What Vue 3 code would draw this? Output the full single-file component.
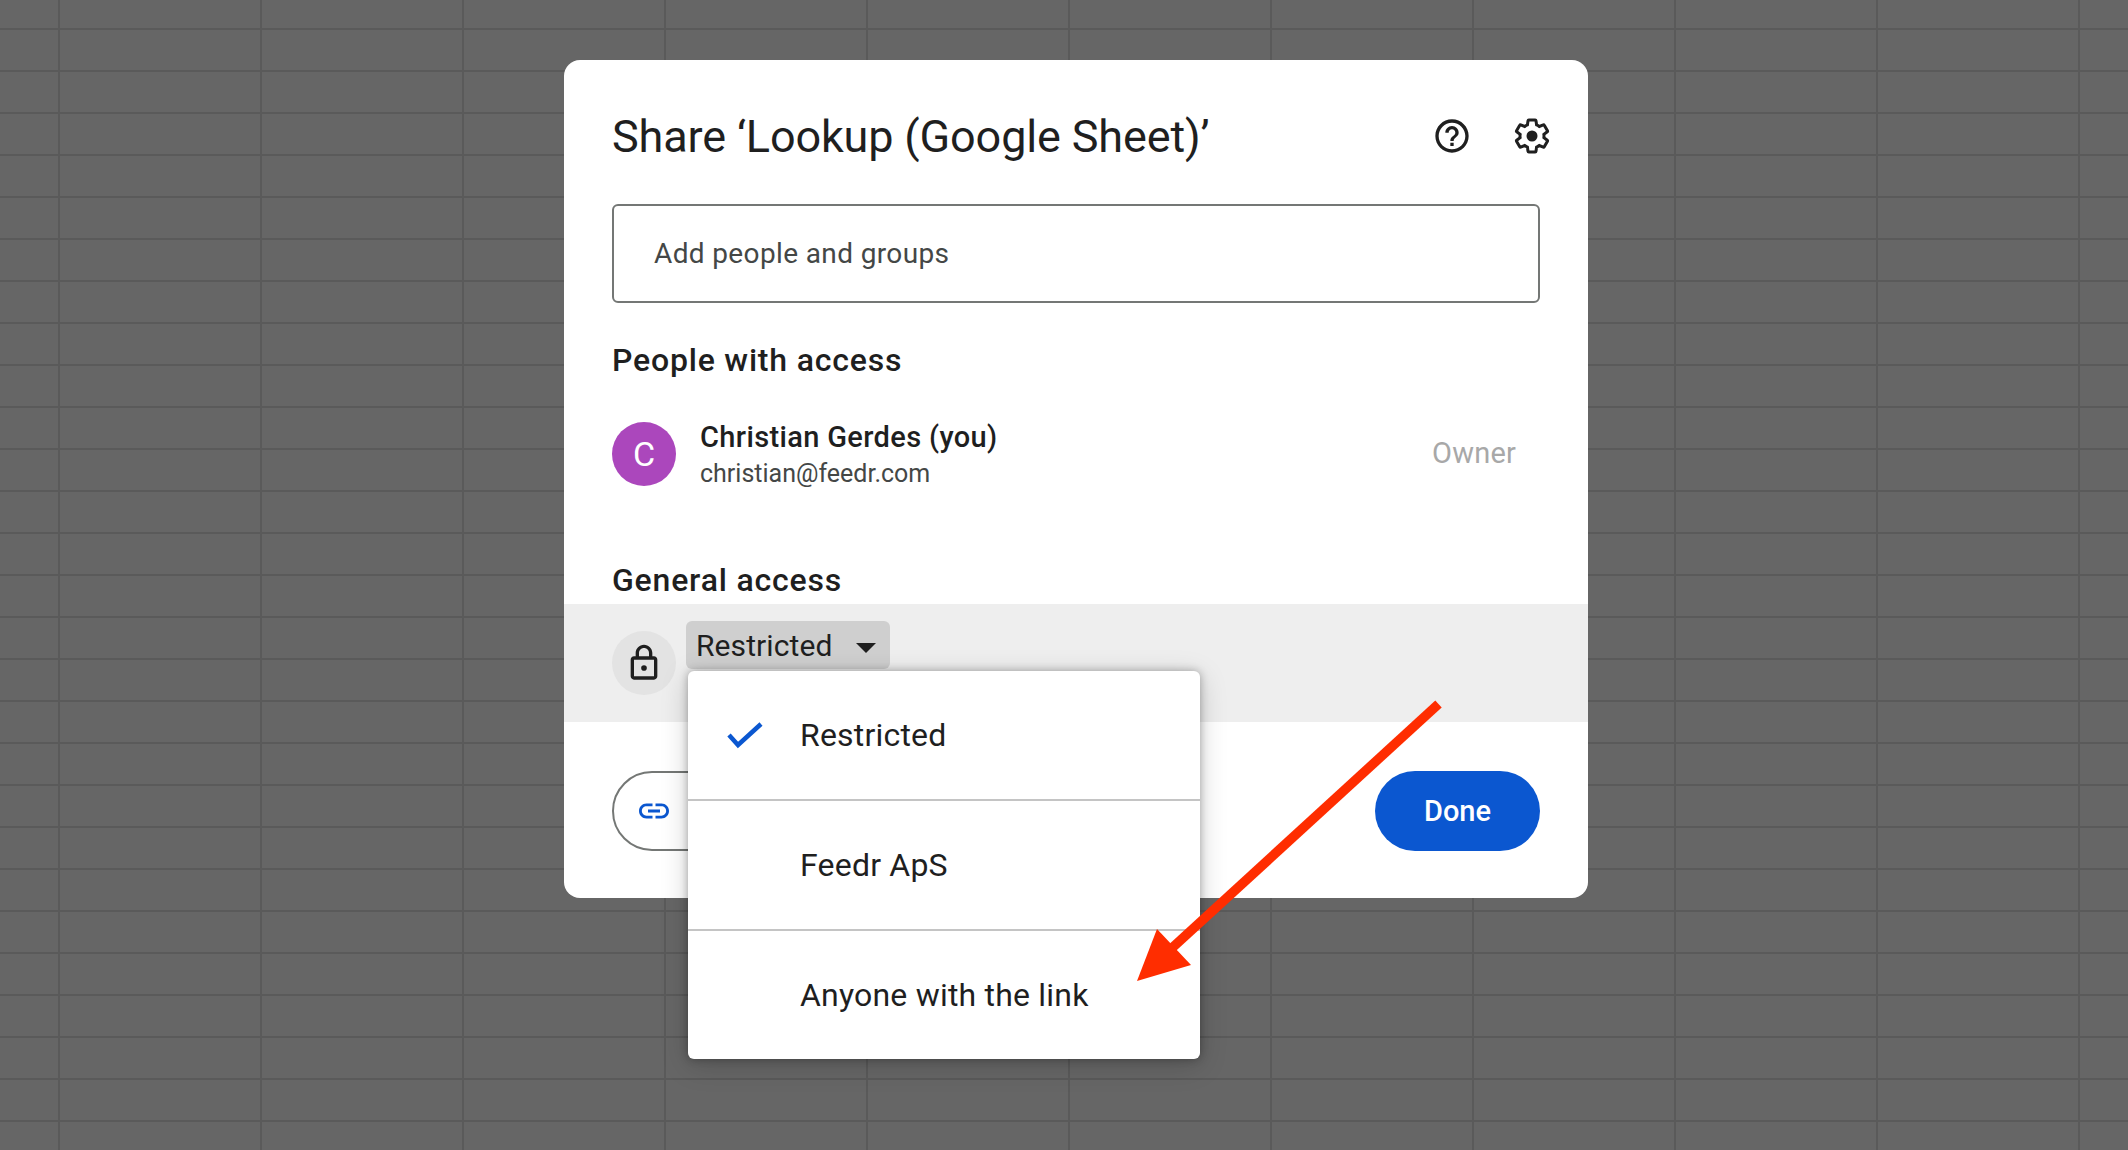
<template>
  <div class="page">
    <div class="dialog">
      <header class="dialog-head">
        <h1 class="title">Share ‘Lookup (Google Sheet)’</h1>
        <div class="head-icons">
          <svg class="icon" viewBox="0 0 24 24">
            <path d="M11 18h2v-2h-2v2zm1-16C6.48 2 2 6.48 2 12s4.48 10 10 10 10-4.48 10-10S17.52 2 12 2zm0 18c-4.41 0-8-3.59-8-8s3.59-8 8-8 8 3.59 8 8-3.59 8-8 8zm0-14c-2.21 0-4 1.79-4 4h2c0-1.1.9-2 2-2s2 .9 2 2c0 2-3 1.75-3 5h2c0-2.25 3-2.5 3-5 0-2.21-1.79-4-4-4z" />
          </svg>
          <svg class="icon" viewBox="0 0 24 24">
            <path class="gear" d="M19.14 12.94c.04-.3.06-.61.06-.94 0-.32-.02-.64-.07-.94l2.03-1.58c.18-.14.23-.41.12-.61l-1.92-3.32c-.12-.22-.37-.29-.59-.22l-2.39.96c-.5-.38-1.03-.7-1.62-.94l-.36-2.54c-.04-.24-.24-.41-.48-.41h-3.84c-.24 0-.43.17-.47.41l-.36 2.54c-.59.24-1.13.57-1.62.94l-2.39-.96c-.22-.08-.47 0-.59.22L2.74 8.87c-.12.21-.08.47.12.61l2.03 1.58c-.05.3-.09.63-.09.94s.02.64.07.94l-2.03 1.58c-.18.14-.23.41-.12.61l1.92 3.32c.12.22.37.29.59.22l2.39-.96c.5.38 1.03.7 1.62.94l.36 2.54c.05.24.24.41.48.41h3.84c.24 0 .44-.17.47-.41l.36-2.54c.59-.24 1.13-.56 1.62-.94l2.39.96c.22.08.47 0 .59-.22l1.92-3.32c.12-.22.07-.47-.12-.61l-2.01-1.58z" />
            <circle cx="12" cy="12" r="3.3" />
          </svg>
        </div>
      </header>

      <div class="people-input">Add people and groups</div>

      <h2 class="section-title first">People with access</h2>
      <div class="person">
        <div class="avatar">C</div>
        <div class="person-text">
          <div class="person-name">Christian Gerdes (you)</div>
          <div class="person-mail">christian@feedr.com</div>
        </div>
        <div class="role">Owner</div>
      </div>

      <h2 class="section-title second">General access</h2>
      <div class="access-band">
        <div class="lock-circle">
          <svg class="icon" viewBox="0 0 24 24">
            <path d="M18 8h-1V6c0-2.76-2.24-5-5-5S7 3.24 7 6v2H6c-1.1 0-2 .9-2 2v10c0 1.1.9 2 2 2h12c1.1 0 2-.9 2-2V10c0-1.1-.9-2-2-2zM9 6c0-1.66 1.34-3 3-3s3 1.34 3 3v2H9V6zm9 14H6V10h12v10z" />
            <circle cx="12" cy="15" r="1.7" />
          </svg>
        </div>
        <div class="access-text">
          <div class="chip">
            <span>Restricted</span>
            <span class="caret"></span>
          </div>
          <div class="access-desc">Only people with access can open with the link</div>
        </div>
      </div>

      <div class="actions">
        <button class="btn-outline">
          <svg class="link-icon" viewBox="0 0 24 24">
            <path d="M3.9 12c0-1.71 1.39-3.1 3.1-3.1h4V7H7c-2.76 0-5 2.24-5 5s2.24 5 5 5h4v-1.9H7c-1.71 0-3.1-1.39-3.1-3.1zM8 13h8v-2H8v2zm9-6h-4v1.9h4c1.71 0 3.1 1.39 3.1 3.1s-1.39 3.1-3.1 3.1h-4V17h4c2.76 0 5-2.24 5-5s-2.24-5-5-5z" />
          </svg>
          <span>Copy link</span>
        </button>
        <button class="btn-done">Done</button>
      </div>

      <div class="menu">
        <div v-for="item in menuItems" :key="item.label" class="menu-row">
          <svg v-if="item.selected" class="check" viewBox="0 0 36 28">
            <polyline points="2,14 11,24 34,3" />
          </svg>
          <span class="menu-label">{{ item.label }}</span>
        </div>
      </div>
    </div>

    <svg class="arrow" viewBox="0 0 2128 1150">
      <line x1="1438.5" y1="704" x2="1172" y2="948" />
      <polygon points="1137,981 1157,929 1191,965" />
    </svg>
  </div>
</template>

<script setup>
const menuItems = [
  { label: 'Restricted', selected: true },
  { label: 'Feedr ApS', selected: false },
  { label: 'Anyone with the link', selected: false }
]
</script>

<style>
html, body {
  margin: 0;
  background: #666;
}
</style>

<style scoped>
.page {
  position: relative;
  width: 2128px;
  height: 1150px;
  overflow: hidden;
  padding: 60px 0 0 564px;
  box-sizing: border-box;
  font-family: Roboto, "Liberation Sans", sans-serif;
  color: #1f1f1f;
  background-color: #666;
  background-image:
    linear-gradient(90deg, #5a5a5a 2px, transparent 2px),
    linear-gradient(180deg, #5a5a5a 2px, transparent 2px);
  background-size: 202px 42px;
  background-position: 58px 28px;
}

.dialog {
  position: relative;
  width: 1024px;
  height: 838px;
  box-sizing: border-box;
  padding: 48px 48px 0;
  background: #fff;
  border-radius: 16px;
}

.dialog-head {
  display: flex;
  align-items: center;
  justify-content: space-between;
  height: 56px;
}

.title {
  margin: 0;
  font-size: 45px;
  font-weight: 400;
  letter-spacing: -0.15px;
}

.head-icons {
  display: flex;
  gap: 40px;
  margin-right: -12px;
}

.icon {
  display: block;
  width: 40px;
  height: 40px;
  fill: #1f1f1f;
}

.gear {
  fill: none;
  stroke: #1f1f1f;
  stroke-width: 1.8;
}

.people-input {
  display: flex;
  align-items: center;
  height: 99px;
  box-sizing: border-box;
  margin-top: 40px;
  padding-left: 40px;
  border: 2px solid #747775;
  border-radius: 6px;
  font-size: 28px;
  letter-spacing: 0.37px;
  color: #444746;
}

.section-title {
  margin: 0;
  font-size: 32px;
  line-height: 40px;
  font-weight: 500;
  letter-spacing: 0.8px;
}

.section-title.first {
  margin-top: 37px;
}

.section-title.second {
  margin-top: 74px;
}

.person {
  display: flex;
  align-items: center;
  margin-top: 42px;
  height: 64px;
}

.avatar {
  display: flex;
  align-items: center;
  justify-content: center;
  width: 64px;
  height: 64px;
  border-radius: 50%;
  background: #ab47bc;
  color: #fff;
  font-size: 34px;
}

.person-text {
  margin-left: 24px;
  padding-top: 2px;
  flex: 1;
}

.person-name {
  font-size: 29px;
  line-height: 36px;
  font-weight: 500;
  letter-spacing: 0.36px;
}

.person-mail {
  margin-top: 1px;
  font-size: 25px;
  line-height: 36px;
  color: #444746;
}

.role {
  margin: -2px 24px 0 0;
  font-size: 29px;
  letter-spacing: 0.2px;
  color: #a8a8a8;
}

.access-band {
  display: flex;
  height: 118px;
  box-sizing: border-box;
  margin: 4px -48px 0;
  padding: 17px 48px 0;
  background: #eee;
}

.lock-circle {
  display: flex;
  align-items: center;
  justify-content: center;
  width: 64px;
  height: 64px;
  margin-top: 10px;
  border-radius: 50%;
  background: #e3e3e3;
}

.access-text {
  margin-left: 10px;
}

.chip {
  display: flex;
  align-items: center;
  justify-content: space-between;
  width: 204px;
  height: 48px;
  box-sizing: border-box;
  padding: 0 14px 0 10px;
  border-radius: 6px;
  background: #cfcfcf;
  font-size: 30px;
  letter-spacing: 0.1px;
}

.caret {
  width: 0;
  height: 0;
  margin-top: 6px;
  border-left: 10px solid transparent;
  border-right: 10px solid transparent;
  border-top: 10px solid #1f1f1f;
}

.access-desc {
  margin: 6px 0 0 14px;
  font-size: 24px;
  line-height: 34px;
  color: #444746;
  white-space: nowrap;
}

.actions {
  display: flex;
  justify-content: space-between;
  margin-top: 49px;
}

.btn-outline,
.btn-done {
  display: flex;
  align-items: center;
  height: 80px;
  border-radius: 40px;
  font-family: inherit;
  font-size: 29px;
  font-weight: 500;
}

.btn-outline {
  gap: 24px;
  padding: 0 38px 0 22px;
  border: 2px solid #747775;
  background: #fff;
  color: #0b57d0;
}

.link-icon {
  width: 36px;
  height: 36px;
  fill: #0b57d0;
}

.btn-done {
  justify-content: center;
  width: 165px;
  border: 0;
  background: #0b57d0;
  color: #fff;
}

.menu {
  position: absolute;
  left: 124px;
  top: 611px;
  width: 512px;
  background: #fff;
  border-radius: 6px;
  box-shadow: 0 0 8px rgba(0, 0, 0, 0.3), 0 6px 28px rgba(0, 0, 0, 0.18);
}

.menu-row {
  position: relative;
  display: flex;
  align-items: center;
  height: 130px;
  box-sizing: border-box;
  padding-left: 112px;
  border-bottom: 2px solid #c4c4c4;
  font-size: 32px;
  letter-spacing: 0.2px;
}

.menu-row:last-child {
  height: 128px;
  border-bottom: 0;
}

.check {
  position: absolute;
  left: 39px;
  top: 50px;
  width: 36px;
  height: 28px;
}

.check polyline {
  fill: none;
  stroke: #0b57d0;
  stroke-width: 4.5;
}

.arrow {
  position: absolute;
  left: 0;
  top: 0;
  width: 2128px;
  height: 1150px;
  pointer-events: none;
}

.arrow line {
  stroke: #ff2d00;
  stroke-width: 9.5;
}

.arrow polygon {
  fill: #ff2d00;
}
</style>
